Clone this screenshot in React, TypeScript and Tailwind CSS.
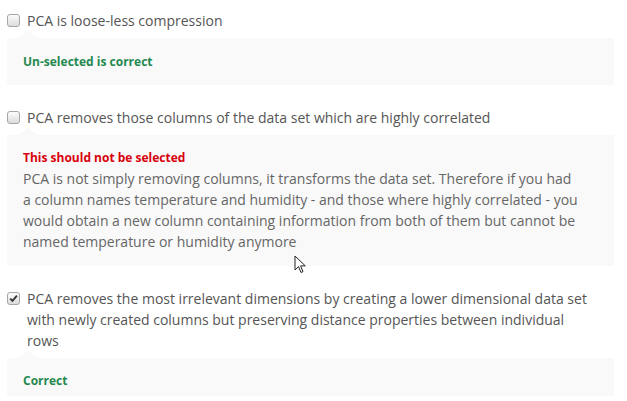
import React from "react";

type Item = {
  label: string;
  checked: boolean;
  status: "ok" | "bad";
  title: string;
  body?: string;
  last?: boolean;
};

const items: Item[] = [
  { label: "PCA is loose-less compression", checked: false, status: "ok", title: "Un-selected is correct" },
  {
    label: "PCA removes those columns of the data set which are highly correlated",
    checked: false,
    status: "bad",
    title: "This should not be selected",
    body: "PCA is not simply removing columns, it transforms the data set. Therefore if you had a column names temperature and humidity - and those where highly correlated - you would obtain a new column containing information from both of them but cannot be named temperature or humidity anymore",
  },
  {
    label:
      "PCA removes the most irrelevant dimensions by creating a lower dimensional data set with newly created columns but preserving distance properties between individual rows",
    checked: true,
    status: "ok",
    title: "Correct",
    last: true,
  },
];

function Checkbox({ checked }: { checked: boolean }) {
  return (
    <span className="mt-[4px] flex h-[13px] w-[13px] shrink-0 items-center justify-center rounded-[3px] border border-[#a6a6a6] bg-gradient-to-b from-[#fcfcfc] to-[#dcdcdc]">
      {checked && (
        <svg width="9" height="9" viewBox="0 0 9 9">
          <path d="M1.2 4.6 L3.5 6.9 L7.9 1.6" fill="none" stroke="#333" strokeWidth="1.8" />
        </svg>
      )}
    </span>
  );
}

export default function App() {
  return (
    <div className="relative h-[401px] w-[627px] overflow-hidden bg-white pt-[10px] font-['Open_Sans',sans-serif] text-[14px] leading-[21px]">
      <div className="flex flex-col gap-[22px] pl-[7px]">
        {items.map((it) => (
          <div key={it.label} className="flex flex-col">
            <label className="flex gap-[7px] text-[#555]">
              <Checkbox checked={it.checked} />
              <span className="max-w-[568px]">{it.label}</span>
            </label>
            <div className="relative mt-[7px] w-[607px] bg-[#f9f9f9] pl-4 pr-[34px]">
              <span className="absolute -top-[8px] left-[12px] h-0 w-0 border-x-[9px] border-b-[8px] border-x-transparent border-b-[#f9f9f9]" />
              <div className={it.last ? "pt-[12px] pb-[5px]" : it.body ? "pt-[12px] pb-[14px]" : "pt-[13px] pb-[13px]"}>
                <div className={`text-[12px] font-bold ${it.status === "ok" ? "text-[#23894f]" : "text-[#d8000c]"}`}>
                  {it.title}
                </div>
                {it.body && <p className="text-[#666]">{it.body}</p>}
              </div>
            </div>
          </div>
        ))}
      </div>
      <svg className="absolute left-[294px] top-[255px]" width="13" height="20" viewBox="0 0 13 20">
        <path d="M1 1 L1 15 L4.5 11.6 L7 17.5 L9 16.6 L6.6 10.9 L11.3 10.9 Z" fill="#fff" stroke="#222" strokeWidth="1" strokeLinejoin="round" />
      </svg>
    </div>
  );
}
